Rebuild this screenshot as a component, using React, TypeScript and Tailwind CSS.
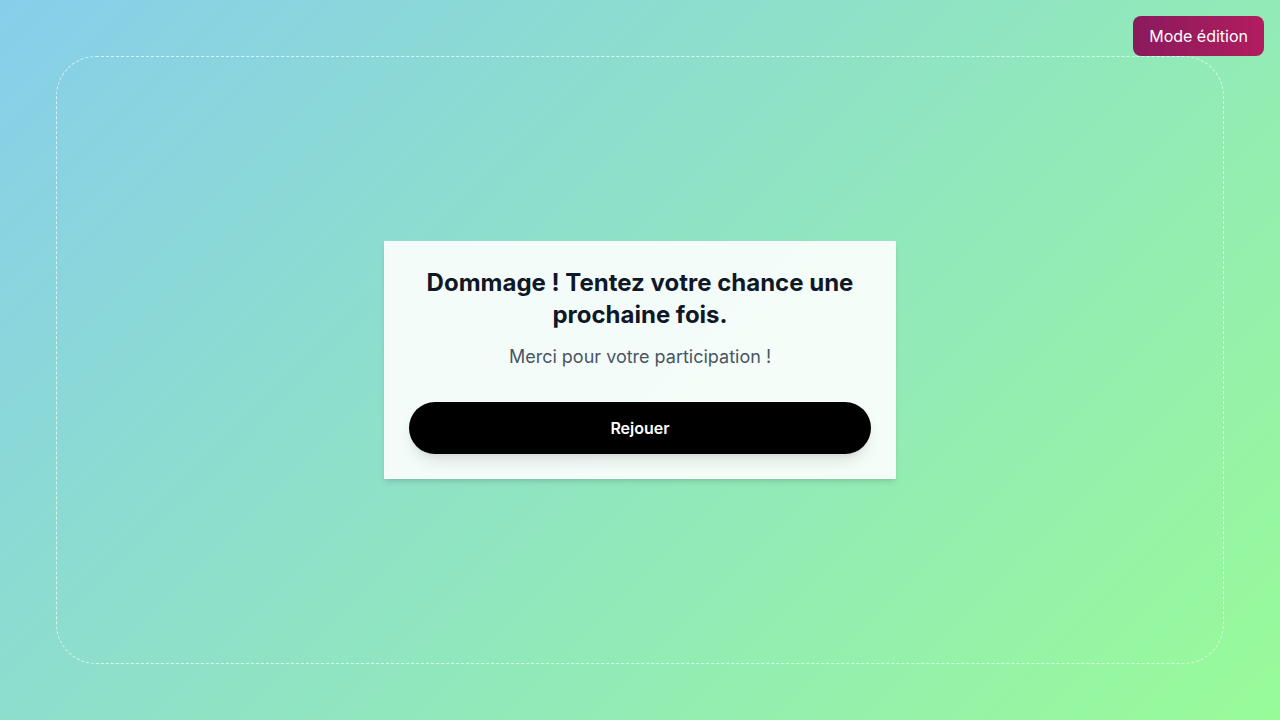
export default function App() {
  return (
    <div
      className="relative flex h-[720px] w-full items-center justify-center bg-[linear-gradient(135deg,#87ceeb,#98fb98)] p-14"
      style={{ fontFamily: 'Inter, "Noto Sans", sans-serif' }}
    >
      {/* edit toggle */}
      <button className="absolute right-4 top-4 z-10 rounded-lg bg-gradient-to-r from-[#8a1a5c] to-[#b21c5f] px-4 py-2 text-base text-white">
        Mode édition
      </button>

      {/* game frame */}
      <div className="flex h-full w-full items-center justify-center rounded-[40px] border border-dashed border-white/70">
        <div className="w-[512px] border border-white/40 bg-white/90 px-6 pb-6 pt-[25px] text-center shadow-md">
          <h2 className="text-2xl font-bold leading-8 text-gray-900">
            Dommage ! Tentez votre chance une prochaine fois.
          </h2>
          <p className="mt-3 text-lg text-gray-600">Merci pour votre participation !</p>
          <button className="mt-[31px] h-[52px] w-full rounded-full bg-black text-base font-semibold text-white shadow-lg">
            Rejouer
          </button>
        </div>
      </div>
    </div>
  )
}
